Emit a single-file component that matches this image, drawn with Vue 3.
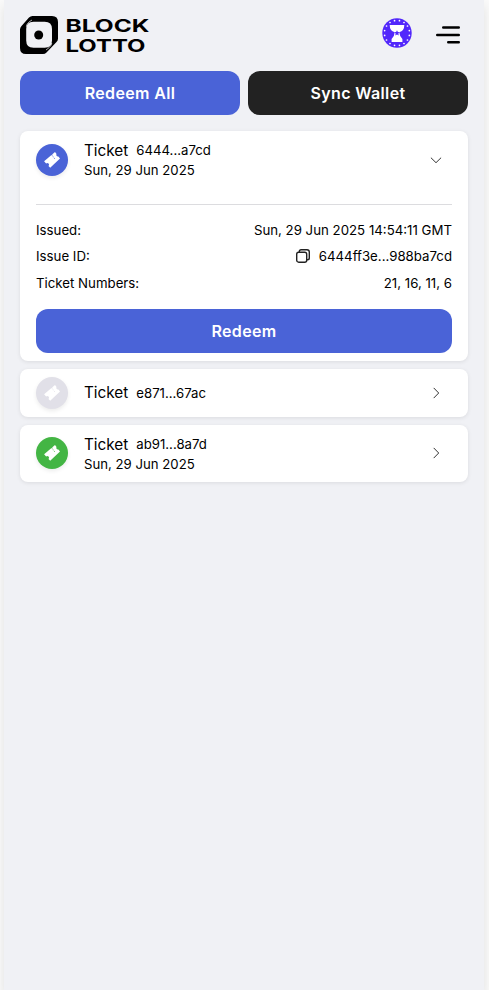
<script setup>
import { ref } from 'vue'

const tickets = ref([
  {
    id: '6444...a7cd', date: 'Sun, 29 Jun 2025', status: 'open', expanded: true,
    issued: 'Sun, 29 Jun 2025 14:54:11 GMT', issueId: '6444ff3e...988ba7cd', numbers: '21, 16, 11, 6',
  },
  { id: 'e871...67ac', status: 'pending', expanded: false },
  { id: 'ab91...8a7d', date: 'Sun, 29 Jun 2025', status: 'won', expanded: false },
])

// Dots around the rim of the round emblem
const dots = Array.from({ length: 16 }, (_, i) => {
  const a = ((i + 0.5) * Math.PI) / 8
  return { x: 15 + 12.6 * Math.cos(a), y: 15 + 12.6 * Math.sin(a) }
})

function toggle(ticket) {
  if (ticket.issued) ticket.expanded = !ticket.expanded
}
</script>

<template>
  <div class="app">
    <header class="header">
      <svg class="logo" width="132" height="40" viewBox="0 0 132 40" role="img" aria-label="Block Lotto">
        <path fill="#000" fill-rule="evenodd" d="M12.500 1H32Q38 1 38 7V23.500Q38 25.500 36.500 27L26.500 37.500Q25 39 23 39H6Q0 39 0 33V14.500Q0 12.500 1.500 11L9 2.500Q10.500 1 12.500 1ZM13.500 6.700Q6.200 6.700 6.200 14V25.500Q6.200 32.800 13.500 32.800H24.700Q32 32.800 32 25.500V14Q32 6.700 24.700 6.700Z" />
        <path stroke="#f0f1f5" stroke-width=".7" fill="none" d="M6.400 11.500Q6.600 9 9 7L12 5M31.800 28Q31.500 30.500 29 32.700L26 35" />
        <circle cx="18.700" cy="20" r="4.500" />
        <text x="45.500" y="17" textLength="84" lengthAdjust="spacingAndGlyphs">BLOCK</text>
        <text x="45.500" y="37" textLength="80" lengthAdjust="spacingAndGlyphs">LOTTO</text>
      </svg>
      <div class="actions">
        <svg width="30" height="30" viewBox="0 0 30 30">
          <circle cx="15" cy="15" r="14.700" fill="#5227fb" />
          <circle v-for="(d, i) in dots" :key="i" :cx="d.x" :cy="d.y" r=".85" fill="#fff" />
          <path fill="#fff" d="M7.700 7H22.300Q22.300 13 17.300 14.200Q17.500 18 20.400 21V24H9.600V21Q12.500 18 12.700 14.200Q7.700 13 7.700 7Z" />
          <path fill="#5227fb" d="M15 12.300l.85 1.700 1.900.2-1.400 1.300.4 1.900L15 16.500l-1.750.9.4-1.900-1.400-1.300 1.900-.2Z" />
        </svg>
        <svg class="menu" width="24" height="18" viewBox="0 0 24 18" fill="none" stroke="#000" stroke-width="2.500" stroke-linecap="round">
          <path d="M7.250 1.600H22.750M1.250 9H22.750M12.250 16.200H22.750" />
        </svg>
      </div>
    </header>

    <div class="toolbar">
      <button class="btn primary">Redeem All</button>
      <button class="btn dark">Sync Wallet</button>
    </div>

    <main class="list">
      <article v-for="t in tickets" :key="t.id" class="card">
        <div class="summary" :class="{ tall: t.date, collapsed: !t.expanded }" @click="toggle(t)">
          <span class="badge" :class="t.status">
            <svg width="16" height="16" viewBox="0 0 16 16" fill="#fff">
              <path fill-rule="evenodd" d="M11 .1L12.500 1.900A1.700 1.700 0 0 0 14.400 4.400L16 6.600L6.200 15.800L4.500 14A1.700 1.700 0 0 0 2.100 11.500L.1 9.300L7.500 3.100L8.100 3.800L8.700 3.300L8.100 2.600ZM9 4.300L8.500 4.800L9.200 5.600L9.700 5.100ZM10.300 5.800L9.800 6.300L10.500 7.100L11 6.600Z" />
            </svg>
          </span>
          <div class="titles">
            <div class="title"><span>Ticket</span><span class="hash">{{ t.id }}</span></div>
            <div v-if="t.date" class="date">{{ t.date }}</div>
          </div>
          <svg class="chevron" :class="{ down: t.expanded }" width="12" height="12" viewBox="0 0 12 12" fill="none" stroke="#333" stroke-width="1">
            <path d="M3.700 .9L8.700 6L3.700 11.100" />
          </svg>
        </div>

        <div v-if="t.expanded" class="details">
          <dl>
            <div class="row"><dt>Issued:</dt><dd>{{ t.issued }}</dd></div>
            <div class="row">
              <dt>Issue ID:</dt>
              <dd>
                <svg class="copy" width="14" height="14" viewBox="0 0 14 14" fill="none" stroke="#222" stroke-width="1.400" stroke-linejoin="round">
                  <rect x=".7" y="3.200" width="10" height="10" rx="2" />
                  <path d="M3.300 3.200V2.500Q3.300 .7 5.100 .7H11Q13.300 .7 13.300 3V8.900Q13.300 10.700 11.500 10.700H10.700" />
                </svg>
                {{ t.issueId }}
              </dd>
            </div>
            <div class="row"><dt>Ticket Numbers:</dt><dd>{{ t.numbers }}</dd></div>
          </dl>
          <button class="btn primary">Redeem</button>
        </div>
      </article>
    </main>
  </div>
</template>

<style>
body {
  background: #fafafa;
  overflow: hidden;
}
</style>

<style scoped>
.app {
  box-sizing: border-box;
  width: 480px;
  min-height: 990px;
  margin-left: 4px;
  padding: 0 16px;
  background: #f0f1f5;
  box-shadow: 0 6px 10px rgba(50, 50, 40, 0.12);
  color: #000;
  font-family: Inter, "Liberation Sans", sans-serif;
}
.header {
  display: flex;
  justify-content: space-between;
  height: 71px;
}
.logo {
  margin-top: 15px;
}
.logo text {
  font-size: 17.5px;
  font-weight: 700;
}
.actions {
  display: flex;
  align-items: flex-start;
  gap: 24px;
  padding: 18px 8px 0 0;
}
.menu {
  margin-top: 8px;
}
.toolbar {
  display: grid;
  grid-template-columns: 1fr 1fr;
  gap: 8px;
}
.btn {
  width: 100%;
  height: 44px;
  padding: 0;
  border: 0;
  border-radius: 12px;
  color: #fff;
  font: 600 16px/24px Inter, "Liberation Sans", sans-serif;
  letter-spacing: 0.35px;
}
.primary {
  background: #4a63d7;
}
.dark {
  background: #222;
}
.list {
  display: flex;
  flex-direction: column;
  gap: 8px;
  padding-top: 16px;
}
.card {
  border-radius: 8px;
  background: #fff;
  box-shadow: 0 1px 4px rgba(0, 0, 0, 0.09);
}
.summary {
  display: flex;
  align-items: center;
  height: 48px;
  padding: 0 26px 0 16px;
}
.summary.tall {
  height: 57px;
}
.badge {
  display: flex;
  align-items: center;
  justify-content: center;
  width: 32px;
  height: 32px;
  border-radius: 50%;
  box-shadow: 0 2px 4px rgba(0, 0, 0, 0.08);
}
.open {
  background: #4a63d7;
}
.pending {
  background: #e1e0e8;
}
.won {
  background: #43b544;
}
.tall.collapsed .badge,
.tall.collapsed .chevron {
  margin-bottom: 1px;
}
.titles {
  flex: 1;
  padding-left: 16px;
}
.title {
  display: flex;
  align-items: baseline;
  gap: 8px;
  font-size: 15.3px;
  line-height: 20px;
}
.hash,
.date {
  font-size: 13.2px;
}
.tall .title {
  align-items: flex-start;
  height: 20px;
  padding-top: 1px;
}
.tall .hash {
  margin-top: -1px;
}
.date {
  margin-top: -1px;
  line-height: 20px;
}
.chevron.down {
  transform: rotate(90deg);
}
.details {
  margin: 16px 16px 0;
  padding: 12px 0 8px;
  border-top: 1px solid #dcdcdf;
}
dl {
  margin: 0 0 12.8px;
}
.row {
  display: flex;
  justify-content: space-between;
  font-size: 13.25px;
  line-height: 26.4px;
}
dt,
dd {
  margin: 0;
}
dd {
  display: flex;
  align-items: center;
  gap: 8px;
}
.copy {
  margin: 0 0.6px 1px 0;
}
</style>
